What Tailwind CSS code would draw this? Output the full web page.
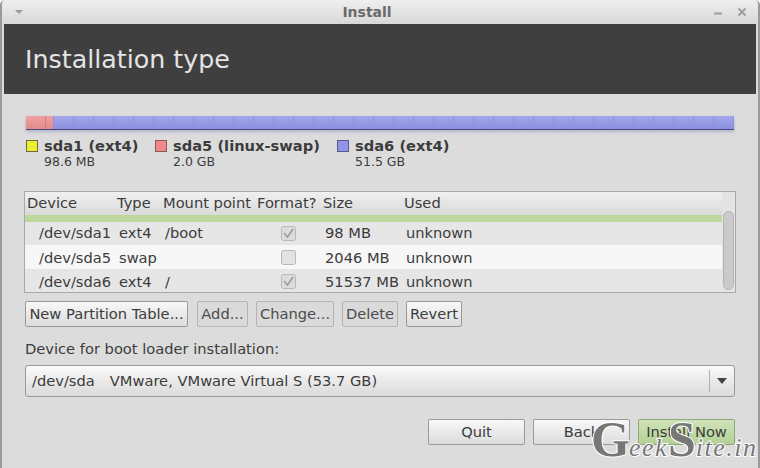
<!DOCTYPE html>
<html lang="en">
<head>
    <meta charset="UTF-8">
    <title>Install</title>
    <script src="https://cdn.jsdelivr.net/npm/@tailwindcss/browser@4"></script>
</head>
<body class="bg-white overflow-hidden">
    <div class="relative w-[760px] h-[468px] overflow-hidden bg-[#dcdcdc] font-['DejaVu_Sans',sans-serif] text-[14.67px] text-[#3c3c3c] rounded-t-[5px] border-l-2 border-r-2 border-[#9a9a9a]">
        <!-- title bar -->
        <div class="h-[24px] flex items-center justify-between bg-gradient-to-b from-[#efefef] to-[#d8d8d8] -mx-[2px] px-[14px]">
            <svg width="10" height="6" viewBox="0 0 10 6"><path d="M1 1h8L5 5z" fill="#9a9a9a"/></svg>
            <span class="font-bold text-[14px] text-[#6a6a6a] ml-[-3px]">Install</span>
            <div class="flex items-center gap-[14px] mr-[-1px]">
                <svg width="10" height="10" viewBox="0 0 10 10"><path d="M1 6.5h8" stroke="#a0a0a0" stroke-width="2"/></svg>
                <svg width="10" height="10" viewBox="0 0 10 10"><path d="M1.5 1.5l7 7M8.5 1.5l-7 7" stroke="#a0a0a0" stroke-width="2"/></svg>
            </div>
        </div>
        <!-- header -->
        <div class="h-[70px] mx-[2px] bg-[#3f3f3f] flex items-center pl-[21px] pt-[2px] text-[25.33px] text-[#e4e4e4]">Installation type</div>

        <div class="pl-[22px]">
            <!-- partition bar -->
            <div class="mt-[22px] ml-[2px] h-[14px] w-[708px] flex shadow-[0_2px_3px_rgba(130,130,190,0.45)] border-b border-[#4a4a7a]">
                <div class="w-[27px] bg-[linear-gradient(90deg,transparent_19px,#c98080_19px,#c98080_20px,transparent_20px),linear-gradient(#f0a0a0,#e48a8a)]"></div>
                <div class="flex-1 bg-[repeating-linear-gradient(90deg,#8f93d8_0,#8f93d8_1px,transparent_1px,transparent_20px),linear-gradient(#a4a8ea,#8a8ede)]"></div>
            </div>

            <!-- legend -->
            <div class="flex mt-[8px] ml-[2px] h-[31px]">
                <div class="flex w-[129px]">
                    <span class="w-[12px] h-[12px] mt-[2px] mr-[6px] border border-[#6a6a40] bg-[#eeee30]"></span>
                    <div><div class="font-bold leading-[16px]">sda1 (ext4)</div><div class="text-[12.5px] leading-[16px]">98.6 MB</div></div>
                </div>
                <div class="flex w-[182px]">
                    <span class="w-[12px] h-[12px] mt-[2px] mr-[6px] border border-[#8a5a5a] bg-[#f08a8a]"></span>
                    <div><div class="font-bold leading-[16px]">sda5 (linux-swap)</div><div class="text-[12.5px] leading-[16px]">2.0 GB</div></div>
                </div>
                <div class="flex">
                    <span class="w-[12px] h-[12px] mt-[2px] mr-[6px] border border-[#5a5a8a] bg-[#9094ea]"></span>
                    <div><div class="font-bold leading-[16px]">sda6 (ext4)</div><div class="text-[12.5px] leading-[16px]">51.5 GB</div></div>
                </div>
            </div>

            <!-- partition table -->
            <div class="mt-[22px] w-[712px] h-[102px] border border-[#a9a9a9] flex">
                <div class="flex-1 flex flex-col">
                    <div class="h-[23px] flex items-center bg-gradient-to-b from-[#f0f0f0] to-[#dadada]">
                        <span class="w-[92px] pl-[2px]">Device</span>
                        <span class="w-[46px]">Type</span>
                        <span class="w-[94px]">Mount point</span>
                        <span class="w-[66px]">Format?</span>
                        <span class="w-[81px]">Size</span>
                        <span>Used</span>
                    </div>
                    <div class="h-[7px] bg-[#bcd89c]"></div>
                    <div class="h-[24px] flex items-center bg-[#e6e6e6]">
                        <span class="w-[94px] pl-[14px]">/dev/sda1</span>
                        <span class="w-[46px]">ext4</span>
                        <span class="w-[116px]">/boot</span>
                        <span class="w-[44px] flex"><svg width="15" height="15" viewBox="0 0 15 15"><rect x=".5" y=".5" width="14" height="14" rx="2" fill="#dcdcdc" stroke="#b8b8b8"/><path d="M3 7l3.5 4L12 3" fill="none" stroke="#9a9a9a" stroke-width="1.6"/></svg></span>
                        <span class="w-[81px] whitespace-nowrap">98 MB</span>
                        <span>unknown</span>
                    </div>
                    <div class="h-[24px] flex items-center pt-[1px] bg-[#f7f7f7]">
                        <span class="w-[94px] pl-[14px]">/dev/sda5</span>
                        <span class="w-[46px]">swap</span>
                        <span class="w-[116px]"></span>
                        <span class="w-[44px] flex"><svg width="15" height="15" viewBox="0 0 15 15"><rect x=".5" y=".5" width="14" height="14" rx="2" fill="#e2e2e2" stroke="#b8b8b8"/></svg></span>
                        <span class="w-[81px] whitespace-nowrap">2046 MB</span>
                        <span>unknown</span>
                    </div>
                    <div class="h-[23px] flex items-center pt-[2px] bg-[#e6e6e6]">
                        <span class="w-[94px] pl-[14px]">/dev/sda6</span>
                        <span class="w-[46px]">ext4</span>
                        <span class="w-[116px]">/</span>
                        <span class="w-[44px] flex"><svg width="15" height="15" viewBox="0 0 15 15"><rect x=".5" y=".5" width="14" height="14" rx="2" fill="#dcdcdc" stroke="#b8b8b8"/><path d="M3 7l3.5 4L12 3" fill="none" stroke="#9a9a9a" stroke-width="1.6"/></svg></span>
                        <span class="w-[81px] whitespace-nowrap">51537 MB</span>
                        <span>unknown</span>
                    </div>
                </div>
                <!-- scrollbar -->
                <div class="w-[13px] bg-[#e4e4e4] pt-[19px] px-[1px] pb-[2px]">
                    <div class="h-full rounded-[6px] border border-[#b4b4b4] bg-[#cacaca]"></div>
                </div>
            </div>

            <!-- partition buttons -->
            <div class="flex gap-[8px] mt-[8px] ml-[1px] h-[26px]">
                <button class="w-[163px] mr-[1px] rounded-[2px] border border-[#9a9a9a] bg-gradient-to-b from-[#f8f8f8] to-[#dcdcdc] whitespace-nowrap">New Partition Table...</button>
                <button class="w-[51px] rounded-[2px] border border-[#b4b4b4] bg-[#dadada] text-[#4c4c4c]">Add...</button>
                <button class="w-[78px] rounded-[2px] border border-[#b4b4b4] bg-[#dadada] text-[#4c4c4c]">Change...</button>
                <button class="w-[56px] rounded-[2px] border border-[#b4b4b4] bg-[#dadada] text-[#4c4c4c]">Delete</button>
                <button class="w-[56px] rounded-[2px] border border-[#9a9a9a] bg-gradient-to-b from-[#f8f8f8] to-[#dcdcdc]">Revert</button>
            </div>

            <div class="mt-[14px] leading-[16px] ml-[1px]">Device for boot loader installation:</div>

            <!-- boot loader combo -->
            <div class="mt-[8px] ml-[1px] w-[710px] h-[32px] flex items-center rounded-[3px] border border-[#9a9a9a] bg-gradient-to-b from-[#fafafa] to-[#dadada] pl-[6px]">
                <span class="flex-1 whitespace-pre">/dev/sda   <span class="ml-[1px]">VMware, VMware Virtual S (53.7 GB)</span></span>
                <span class="w-[25px] h-[22px] border-l border-[#b0b0b0] flex items-center justify-center">
                    <svg width="10" height="6" viewBox="0 0 10 6"><path d="M0 0h10L5 6z" fill="#444"/></svg>
                </span>
            </div>

            <!-- navigation -->
            <div class="flex justify-end gap-[8px] mt-[22px] w-[711px] h-[26px]">
                <button class="w-[97px] rounded-[2px] border border-[#9a9a9a] bg-gradient-to-b from-[#f8f8f8] to-[#dcdcdc]">Quit</button>
                <button class="w-[97px] rounded-[2px] border border-[#9a9a9a] bg-gradient-to-b from-[#f8f8f8] to-[#dcdcdc]">Back</button>
                <button class="w-[97px] rounded-[2px] border border-[#8fa87a] bg-gradient-to-b from-[#cfe3b8] to-[#b4d096]">Install Now</button>
            </div>
        </div>

        <!-- watermark -->
        <div class="absolute left-[589px] top-[414px] flex items-baseline whitespace-nowrap font-['Liberation_Serif',serif] text-[#777] [-webkit-text-stroke:2px_white] [paint-order:stroke_fill]">
            <span class="text-[50px] font-bold leading-[50px]">G</span>
            <span class="text-[26px] italic leading-[50px] tracking-[1.5px] -ml-[1px]">eek</span>
            <span class="text-[50px] font-bold leading-[50px]">S</span>
            <span class="text-[26px] italic leading-[50px] tracking-[1.5px]">ite.in</span>
        </div>
    </div>
</body>
</html>
